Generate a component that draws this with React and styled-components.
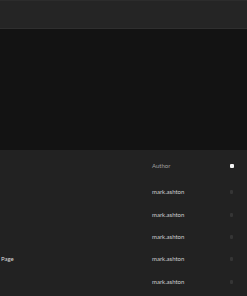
import React from 'react';
import styled, { createGlobalStyle } from 'styled-components';

const GlobalStyle = createGlobalStyle`
  html, body {
    margin: 0;
    padding: 0;
    background: #222222;
    font-family: Lato, "Liberation Sans", sans-serif;
  }
`;

const Page = styled.div`
  width: 247px;
  height: 296px;
  overflow: hidden;
  background: #222222;
`;

const TopBar = styled.div`
  height: 27px;
  background: #252525;
  border-top: 1px solid #2c2c2c;
  border-bottom: 1px solid #2f2f2f;
`;

const Preview = styled.div`
  height: 121px;
  background: #131313;
`;

const Table = styled.div`
  display: flex;
  flex-direction: column;
`;

const Row = styled.div`
  display: grid;
  grid-template-columns: 152px 1fr 20px;
  align-items: center;
  height: ${(p) => (p.$head ? '31px' : '22.4px')};
`;

const Cell = styled.div`
  font-size: 6px;
  line-height: 1;
  color: ${(p) => p.$color || '#cfcfcf'};
  white-space: nowrap;
  padding-left: ${(p) => p.$pad || 0}px;
`;

const Dot = styled.span`
  display: block;
  width: ${(p) => (p.$active ? '4px' : '3px')};
  height: 4px;
  margin-left: 3px;
  border-radius: 1px;
  background: ${(p) => (p.$active ? '#f4f4f4' : '#353535')};
`;

const rows = ['', '', '', 'Page', ''];

export default function App() {
  return (
    <Page>
      <GlobalStyle />
      <TopBar />
      <Preview />
      <Table>
        <Row $head>
          <Cell />
          <Cell $color="#a0a0a0">Author</Cell>
          <Dot $active />
        </Row>
        {rows.map((label, i) => (
          <Row key={i}>
            <Cell $pad={1} $color="#dddddd">{label}</Cell>
            <Cell>mark.ashton</Cell>
            <Dot />
          </Row>
        ))}
      </Table>
    </Page>
  );
}
